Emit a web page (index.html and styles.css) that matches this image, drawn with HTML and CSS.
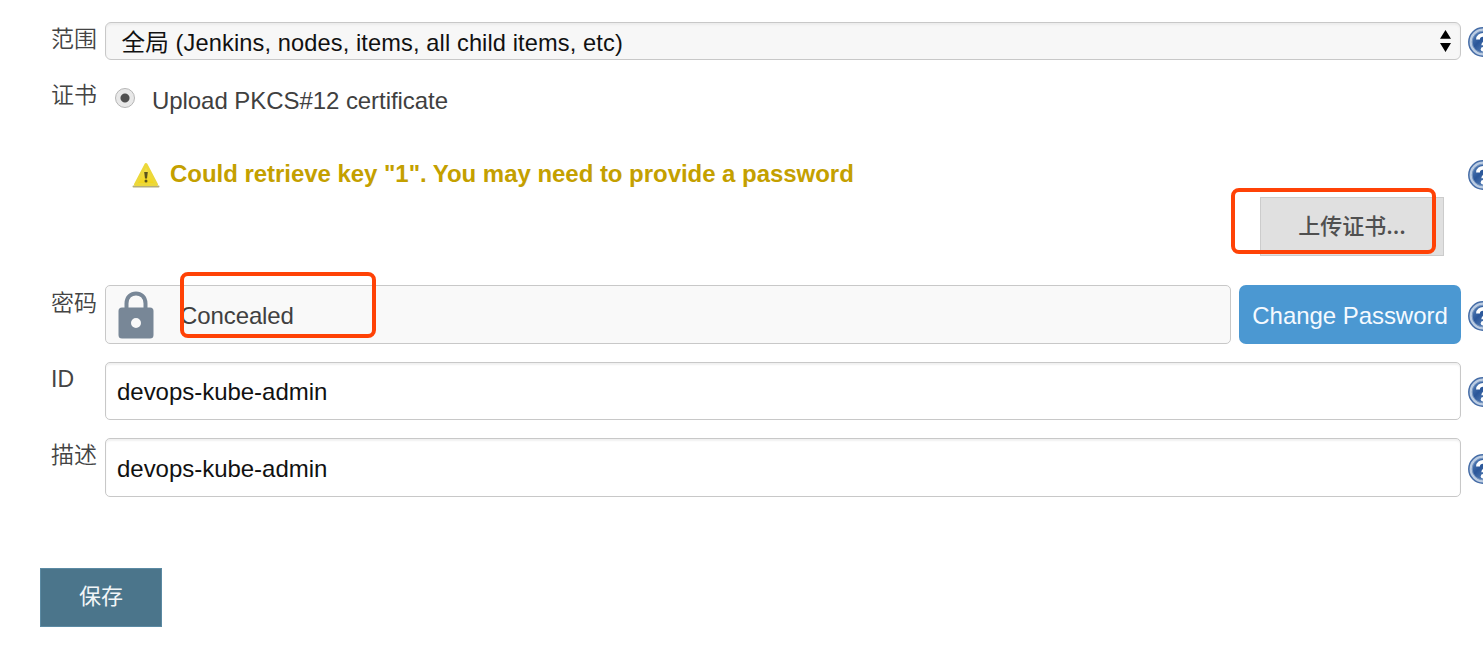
FILE: index.html
```html
<!DOCTYPE html>
<html lang="zh-CN">
<head>
<meta charset="utf-8">
<title>Jenkins</title>
<link rel="stylesheet" href="styles.css">
</head>
<body>
<svg width="0" height="0" class="defs" aria-hidden="true">
  <defs>
    <linearGradient id="blue" x1="0" y1="0" x2="1" y2="1"><stop offset="0" stop-color="#5d88bd"/><stop offset=".4" stop-color="#2a5699"/><stop offset="1" stop-color="#6f96c6"/></linearGradient>
    <linearGradient id="yellow" x1="0" y1="0" x2="0" y2="1"><stop offset="0" stop-color="#f3e05a"/><stop offset="1" stop-color="#f2d51a"/></linearGradient>
    <symbol id="help" viewBox="0 0 30 30">
      <circle cx="15" cy="15" r="14.2" fill="#bccde3" stroke="#456ca6" stroke-width="1.5"/>
      <circle cx="15" cy="15" r="10.8" fill="url(#blue)" stroke="#7896c0" stroke-width="1"/>
      <path d="M10 12.5C10 6.5 20.5 6.5 20.5 12C20.5 15 15.2 14.7 15.2 18.2" fill="none" stroke="#fff" stroke-width="3.8"/>
      <circle cx="15" cy="22.2" r="2.2" fill="#fff"/>
    </symbol>
  </defs>
</svg>
<form class="form">
  <div class="row row-scope">
    <label class="label">范围</label>
    <div class="field select"><span>全局 (Jenkins, nodes, items, all child items, etc)</span>
      <svg class="arrows" width="11" height="22" viewBox="0 0 11 22"><path d="M5.5 0L11 8.7H0zM0 13H11L5.5 22z" fill="#000"/></svg>
    </div>
    <svg class="help"><use href="#help"/></svg>
  </div>
  <div class="row row-cert">
    <label class="label">证书</label>
    <div class="radio-line"><span class="radio"></span><span class="radio-text">Upload PKCS#12 certificate</span></div>
  </div>
  <div class="row row-warning">
    <div class="warning">
      <svg width="28" height="27" viewBox="0 0 28 27"><path d="M1.5 25.5H26.5" stroke="#b5ae78" stroke-width="2" stroke-linecap="round"/><path d="M14 3.5L24.5 23.5H3.5z" fill="url(#yellow)" stroke="#ecd83a" stroke-width="3" stroke-linejoin="round"/><path d="M12.2 11H15.8L15 17.5H13z" fill="#5a531d"/><circle cx="14" cy="20" r="1.5" fill="#5a531d"/></svg>
      <span>Could retrieve key "1". You may need to provide a password</span>
    </div>
    <svg class="help"><use href="#help"/></svg>
  </div>
  <div class="upload-line">
    <button type="button" class="upload">上传证书...</button>
    <span class="mark mark-upload"></span>
  </div>
  <div class="row row-input row-password">
    <label class="label">密码</label>
    <div class="password">
      <div class="field concealed">
        <svg width="36" height="48" viewBox="0 0 36 48"><path d="M8.5 20V12.5C8.5-1 27.5-1 27.5 12.5V20" fill="none" stroke="#788797" stroke-width="4"/><path fill-rule="evenodd" d="M4 16.5H32Q35.5 16.5 35.5 20V44Q35.5 47.5 32 47.5H4Q.5 47.5.5 44V20Q.5 16.5 4 16.5ZM18 27A5 5 0 1 0 18 37A5 5 0 1 0 18 27Z" fill="#788797"/></svg>
        <span class="concealed-text">Concealed</span>
        <span class="mark mark-concealed"></span>
      </div>
      <button type="button" class="change">Change Password</button>
    </div>
    <svg class="help"><use href="#help"/></svg>
  </div>
  <div class="row row-input">
    <label class="label">ID</label>
    <div class="field input">devops-kube-admin</div>
    <svg class="help"><use href="#help"/></svg>
  </div>
  <div class="row row-input row-last">
    <label class="label">描述</label>
    <div class="field input">devops-kube-admin</div>
    <svg class="help"><use href="#help"/></svg>
  </div>
  <button type="button" class="save">保存</button>
</form>
</body>
</html>
```

FILE: styles.css
```css
* { box-sizing: border-box; }
body { margin: 0; width: 1483px; height: 650px; overflow: hidden; background: #fff; color: #404040; font: 24px/28px "Liberation Sans", "Noto Sans CJK SC", sans-serif; }
button { font: inherit; border: 0; padding: 0; }
.defs { display: block; height: 0; }
.form { padding-top: 22px; overflow: hidden; }
.row { display: grid; grid-template-columns: 54px 1356px 30px; padding-left: 51px; align-items: center; }
.label { align-self: start; font-size: 23px; font-weight: 350; color: #444; }
.help { width: 30px; height: 30px; margin: 2px 0 0 7px; }
.field { border: 1px solid #c8c8c8; border-radius: 5px; display: flex; align-items: center; color: #111; white-space: nowrap; }
.row-scope { height: 38px; }
.row-scope .label { padding-top: 3px; }
.select { height: 38px; justify-content: space-between; padding: 4px 9px 0 15.5px; background: #f7f7f7; border-radius: 6px; box-shadow: inset 0 2px 2px #ececec; font-size: 23.6px; letter-spacing: .12px; }
.arrows { margin-top: -5px; }
.row-cert { margin-top: 20px; height: 42px; }
.row-cert .label { padding-top: 1px; }
.radio-line { display: flex; align-items: center; gap: 17px; padding-left: 10px; }
.radio { width: 20px; height: 20px; border-radius: 50%; border: 1px solid #b5b5b5; margin-top: -6px; background: radial-gradient(circle, #505050 0 4px, #e8e8e8 5px); }
.radio-text { letter-spacing: -.06px; }
.row-warning { height: 30px; margin-top: 36px; }
.warning { grid-column: 2; display: flex; align-items: center; gap: 10px; padding-left: 27px; color: #c4a000; font-weight: bold; white-space: nowrap; letter-spacing: -.04px; }
.warning svg { margin-top: 1px; }
.upload-line { position: relative; display: flex; padding: 9px 39px 0 0; justify-content: flex-end; }
.upload { width: 184px; height: 59px; padding-bottom: 5px; background: #e0e0e0; border: 1px solid #ccc; color: #505050; font-family: "Noto Sans CJK SC", sans-serif; font-size: 22px; font-weight: 500; }
.mark { position: absolute; border: 4px solid #ff4206; border-radius: 8px; }
.mark-upload { left: 1231px; top: 0; width: 205px; height: 66px; }
.row-input { height: 58px; margin-top: 18px; }
.row-password { margin-top: 29px; height: 59px; }
.row-input .label { padding-top: 3px; }
.row-password .label { padding-top: 4px; }
.password { display: grid; grid-template-columns: 1126px 222px; gap: 8px; }
.concealed { position: relative; height: 59px; padding-left: 12px; gap: 27px; background: #f9f9f9; color: #404040; }
.concealed-text { padding-top: 2px; margin-left: -1px; letter-spacing: -.1px; }
.mark-concealed { left: 74px; top: -14px; width: 196px; height: 66px; }
.change { height: 59px; padding-top: 2px; background: #4b98d2; color: #f5faff; border-radius: 7px; letter-spacing: -.05px; }
.input { height: 58px; padding: 1px 0 0 11px; box-shadow: inset 0 2px 2px #f1f1f1; letter-spacing: -.03px; }
.row-last .input { height: 59px; padding-top: 2px; }
.save { display: block; margin: 72px 0 0 40px; width: 122px; height: 59px; padding-bottom: 1px; background: #4b758b; border: 1px solid #5b8aa3; color: #f1f5f7; font-size: 22px; font-weight: 400; }
```
